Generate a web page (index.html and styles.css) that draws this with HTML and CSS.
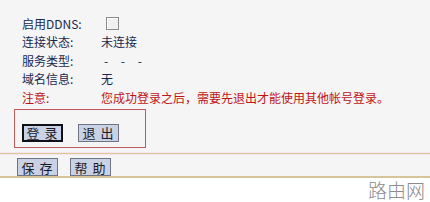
FILE: index.html
```html
<!DOCTYPE html>
<html>
<head>
<meta charset="utf-8">
<link rel="stylesheet" href="styles.css">
</head>
<body>
<div class="panel">
  <div class="form">
    <div class="row"><span class="label">启用DDNS:</span><span class="value"><span class="checkbox"></span></span></div>
    <div class="row"><span class="label">连接状态:</span><span class="value">未连接</span></div>
    <div class="row"><span class="label">服务类型:</span><span class="value dash">- - -</span></div>
    <div class="row"><span class="label">域名信息:</span><span class="value">无</span></div>
    <div class="row note"><span class="label">注意:</span><span class="value">您成功登录之后，需要先退出才能使用其他帐号登录。</span></div>
  </div>
  <div class="login-box">
    <button class="btn focused">登 录</button>
    <button class="btn">退 出</button>
  </div>
  <div class="sep"></div>
  <div class="actions">
    <button class="btn">保 存</button>
    <button class="btn">帮 助</button>
  </div>
</div>
<div class="footer"><span class="watermark">路由网</span></div>
</body>
</html>
```
FILE: styles.css
```css
html, body {
  margin: 0;
  padding: 0;
  background: #ffffff;
}
body {
  width: 430px;
  height: 202px;
  overflow: hidden;
  font-family: "Noto Sans CJK SC", "Liberation Sans", sans-serif;
  font-size: 12px;
}
.panel {
  background: #f5f5f5;
  height: 176px;
  border-bottom: 2px solid #d6c49a;
  display: flex;
  flex-direction: column;
}
.form {
  padding: 14px 0 0 22px;
}
.row {
  display: flex;
  align-items: center;
  height: 18.5px;
  color: #1a2850;
}
.label {
  width: 79px;
  flex: none;
}
.value {
  display: flex;
  align-items: center;
}
.dash {
  letter-spacing: 5px;
  padding-left: 3px;
}
.note {
  color: #c01414;
}
.checkbox {
  display: inline-block;
  width: 11px;
  height: 11px;
  margin-left: 5px;
  border: 1px solid #8a8a8a;
  background: #f0f0f0;
  box-shadow: inset 1px 1px 0 #ffffff;
}
.login-box {
  margin: 2px 0 0 14px;
  width: 123px;
  height: 36px;
  border: 1px solid #c05a5a;
  padding: 14px 0 0 7px;
  display: flex;
  gap: 15px;
  align-items: flex-start;
}
.btn {
  font-family: "Noto Sans CJK SC", "Liberation Sans", sans-serif;
  font-size: 13px;
  line-height: 15px;
  height: 18px;
  padding: 0;
  width: 41px;
  color: #1a1a2a;
  background: #c9d2e4;
  border: 1px solid #6e7385;
  border-radius: 0;
  letter-spacing: 1px;
  display: flex;
  align-items: center;
  justify-content: center;
}
.btn.focused {
  border: 2px solid #101018;
}
.sep {
  margin-top: 4px;
  height: 2px;
  background: #d9c899;
  border-top: 1px solid #f6e4ec;
  border-bottom: 1px solid #f6e4ec;
}
.actions {
  display: flex;
  gap: 12px;
  padding: 3px 0 0 17px;
}
.footer {
  display: flex;
  justify-content: flex-end;
  padding-right: 5px;
}
.watermark {
  font-size: 19px;
  line-height: 24px;
  color: #8c8c8c;
  font-weight: 300;
}
```
